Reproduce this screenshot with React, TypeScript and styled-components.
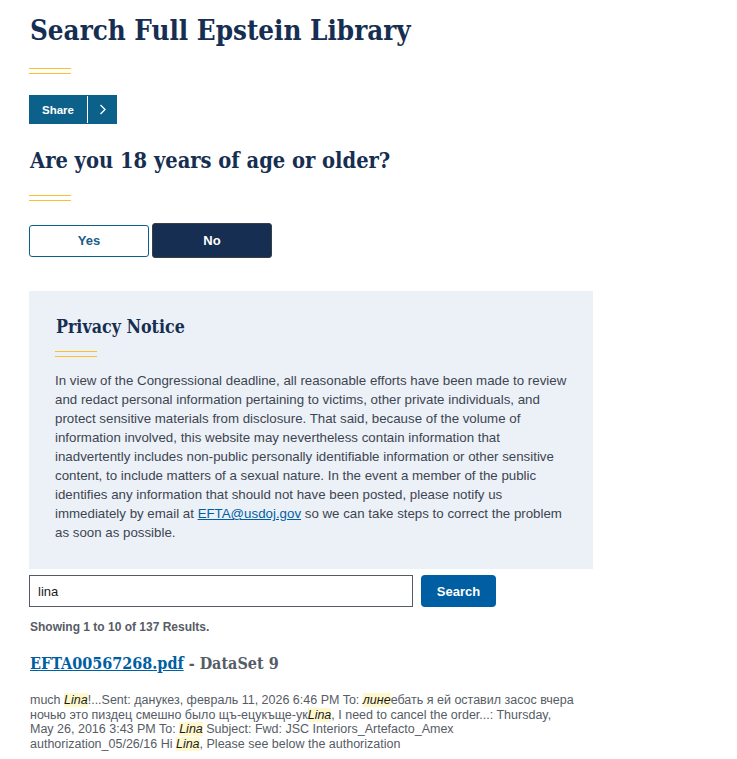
import styled, { createGlobalStyle } from "styled-components";

const GlobalStyle = createGlobalStyle`
  html, body {
    margin: 0;
    padding: 0;
    background: #fff;
  }
  body {
    font-family: "Liberation Sans", Arial, sans-serif;
    color: #1b1b1b;
  }
  * {
    box-sizing: border-box;
  }
`;

const serif = `"DejaVu Serif Condensed", "DejaVu Serif", Georgia, serif`;

const Page = styled.main`
  width: 564px;
  margin-left: 29px;
  padding-top: 10px;
`;

const Title = styled.h1`
  margin: 0 0 0 1px;
  font-family: ${serif};
  font-stretch: condensed;
  font-weight: 700;
  font-size: 27.5px;
  line-height: 40px;
  color: #162e51;
`;

const Heading = styled.h2<{ $size?: number; $top?: number }>`
  margin: ${(p) => p.$top ?? 0}px 0 0 1px;
  font-family: ${serif};
  font-stretch: condensed;
  font-weight: 700;
  font-size: ${(p) => p.$size ?? 21.7}px;
  line-height: 1.3;
  color: #162e51;
`;

const Rule = styled.div<{ $top: number; $bottom: number }>`
  width: 42px;
  height: 6px;
  margin: ${(p) => p.$top}px 0 ${(p) => p.$bottom}px;
  border-top: 1px solid #ffbe2e;
  border-bottom: 1px solid #ffbe2e;
`;

const ShareButton = styled.button`
  display: flex;
  align-items: stretch;
  height: 29px;
  padding: 0;
  border: 0;
  background: #0b6189;
  color: #fff;
  font-family: "Liberation Sans", Arial, sans-serif;
  font-weight: 700;
  font-size: 11.5px;
  cursor: pointer;
`;

const ShareLabel = styled.span`
  display: flex;
  align-items: center;
  justify-content: center;
  width: 59px;
  border-right: 1px solid #fff;
  margin: 1px 0;
`;

const ShareArrow = styled.span`
  display: flex;
  align-items: center;
  justify-content: center;
  width: 29px;
`;

const Choices = styled.div`
  display: flex;
  align-items: center;
  gap: 3px;
`;

const Choice = styled.button<{ $primary?: boolean }>`
  width: 120px;
  height: ${(p) => (p.$primary ? 35 : 32)}px;
  border-radius: 3px;
  border: 1px solid ${(p) => (p.$primary ? "#3a3f47" : "#0b6189")};
  background: ${(p) => (p.$primary ? "#162e51" : "#fff")};
  color: ${(p) => (p.$primary ? "#fff" : "#1a5c8a")};
  font-family: "Liberation Sans", Arial, sans-serif;
  font-weight: 700;
  font-size: 13px;
  cursor: pointer;
`;

const Notice = styled.section`
  margin-top: 33px;
  padding: 24px 26px 27px;
  background: #ecf1f7;
`;

const NoticeText = styled.p`
  margin: 0;
  font-family: "Liberation Sans", Arial, sans-serif;
  font-size: 13.3px;
  line-height: 19px;
  color: #3d4551;

  a {
    color: #005ea2;
  }
`;

const SearchRow = styled.form`
  display: flex;
  gap: 8px;
  margin-top: 6px;
`;

const SearchInput = styled.input`
  width: 384px;
  height: 32px;
  padding: 0 8px;
  border: 1px solid #565c65;
  border-radius: 0;
  font-family: "Liberation Sans", Arial, sans-serif;
  font-size: 13px;
  color: #1b1b1b;
`;

const SearchButton = styled.button`
  width: 75px;
  height: 32px;
  border: 0;
  border-radius: 4px;
  background: #005ea2;
  color: #fff;
  font-family: "Liberation Sans", Arial, sans-serif;
  font-weight: 700;
  font-size: 13px;
  cursor: pointer;
`;

const Summary = styled.p`
  margin: 13px 0 0 1px;
  font-weight: 700;
  font-size: 12px;
  color: #565c65;
`;

const ResultTitle = styled.h3`
  margin: 20px 0 0 1px;
  font-family: ${serif};
  font-stretch: condensed;
  font-weight: 700;
  font-size: 16px;
  line-height: 1.3;
  color: #565c65;

  a {
    color: #005ea2;
  }
`;

const Snippet = styled.p`
  margin: 18px 0 0 1px;
  font-family: "Liberation Sans", Arial, sans-serif;
  font-size: 12.5px;
  line-height: 14.6px;
  color: #565c65;
  width: 545px;
`;

const Hit = styled.em`
  background: #fff8cc;
  color: #1b1b1b;
`;

export default function App() {
  return (
    <>
      <GlobalStyle />
      <Page>
        <Title>Search Full Epstein Library</Title>
        <Rule $top={18} $bottom={21} />
        <ShareButton type="button">
          <ShareLabel>Share</ShareLabel>
          <ShareArrow>
            <svg width="8" height="11" viewBox="0 0 8 11" fill="none">
              <path d="M1.5 1 L6 5.5 L1.5 10" stroke="#fff" strokeWidth="1.3" />
            </svg>
          </ShareArrow>
        </ShareButton>
        <Heading $top={23}>Are you 18 years of age or older?</Heading>
        <Rule $top={20} $bottom={22} />
        <Choices>
          <Choice type="button">Yes</Choice>
          <Choice type="button" $primary>
            No
          </Choice>
        </Choices>
        <Notice>
          <Heading $size={17.7}>Privacy Notice</Heading>
          <Rule $top={13} $bottom={14} />
          <NoticeText>
            In view of the Congressional deadline, all reasonable efforts have been made to review
            and redact personal information pertaining to victims, other private individuals, and
            protect sensitive materials from disclosure. That said, because of the volume of
            information involved, this website may nevertheless contain information that
            inadvertently includes non-public personally identifiable information or other sensitive
            content, to include matters of a sexual nature. In the event a member of the public
            identifies any information that should not have been posted, please notify us
            immediately by email at <a href="mailto:EFTA@usdoj.gov">EFTA@usdoj.gov</a> so we can
            take steps to correct the problem as soon as possible.
          </NoticeText>
        </Notice>
        <SearchRow onSubmit={(e) => e.preventDefault()}>
          <SearchInput defaultValue="lina" />
          <SearchButton type="submit">Search</SearchButton>
        </SearchRow>
        <Summary>Showing 1 to 10 of 137 Results.</Summary>
        <ResultTitle>
          <a href="#">EFTA00567268.pdf</a> - DataSet 9
        </ResultTitle>
        <Snippet>
          much <Hit>Lina</Hit>!...Sent: данукез, февраль 11, 2026 6:46 PM To: <Hit>лине</Hit>ебать я ей
          оставил засос вчера ночью это пиздец смешно было щъ-ецукъще-ук<Hit>Lina</Hit>, I need to
          cancel the order...: Thursday, May 26, 2016 3:43 PM To: <Hit>Lina</Hit> Subject: Fwd: JSC
          Interiors_Artefacto_Amex authorization_05/26/16 Hi <Hit>Lina</Hit>, Please see below the
          authorization
        </Snippet>
      </Page>
    </>
  );
}
